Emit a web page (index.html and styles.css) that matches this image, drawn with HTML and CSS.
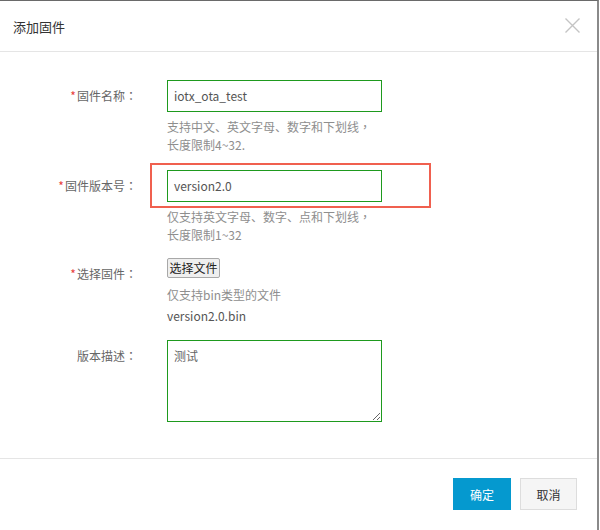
FILE: index.html
```html
<!DOCTYPE html>
<html lang="zh-CN">
<head>
<meta charset="utf-8">
<title>添加固件</title>
<link rel="stylesheet" href="styles.css">
</head>
<body>
<div class="dialog">
  <div class="dialog-header">
    <span class="dialog-title">添加固件</span>
    <span class="dialog-close" aria-label="关闭">
      <svg width="15" height="15" viewBox="0 0 15 15"><path d="M0.5 0.5 L14.5 14.5 M14.5 0.5 L0.5 14.5" stroke="#c4c4c4" stroke-width="1.4" fill="none"/></svg>
    </span>
  </div>
  <div class="dialog-body">
    <div class="form-row row-1">
      <div class="form-label"><span class="req">*</span>固件名称<span class="colon" lang="zh-TW">：</span></div>
      <div class="form-field">
        <div class="input">iotx_ota_test</div>
        <div class="help">支持中文、英文字母、数字和下划线<span class="colon" lang="zh-TW">，</span><br>长度限制4~32.</div>
      </div>
    </div>
    <div class="form-row row-2">
      <div class="form-label"><span class="req">*</span>固件版本号<span class="colon" lang="zh-TW">：</span></div>
      <div class="form-field">
        <div class="input-wrap">
          <div class="input">version2.0</div>
          <div class="highlight"></div>
        </div>
        <div class="help">仅支持英文字母、数字、点和下划线<span class="colon" lang="zh-TW">，</span><br>长度限制1~32</div>
      </div>
    </div>
    <div class="form-row row-3">
      <div class="form-label"><span class="req">*</span>选择固件<span class="colon" lang="zh-TW">：</span></div>
      <div class="form-field">
        <button class="file-btn" type="button">选择文件</button>
        <div class="help help-file">仅支持bin类型的文件</div>
        <div class="file-name">version2.0.bin</div>
      </div>
    </div>
    <div class="form-row row-4">
      <div class="form-label">版本描述<span class="colon" lang="zh-TW">：</span></div>
      <div class="form-field">
        <textarea class="textarea">测试</textarea>
      </div>
    </div>
  </div>
  <div class="dialog-footer">
    <button class="btn btn-primary" type="button">确定</button>
    <button class="btn btn-default" type="button">取消</button>
  </div>
</div>
</body>
</html>
```

FILE: styles.css
```css
html, body {
  margin: 0;
  padding: 0;
  background: #ffffff;
}
body {
  font-family: "Noto Sans CJK SC", "Noto Sans", sans-serif;
  font-size: 12px;
  color: #666666;
}
.dialog {
  width: 597px;
  height: 529px;
  border-top: 1px solid #6a6a6a;
  border-right: 2px solid #8a8a8a;
  background: #ffffff;
}
.dialog-header {
  height: 50px;
  border-bottom: 1px solid #e5e5e5;
  display: flex;
  align-items: center;
  justify-content: space-between;
  padding: 0 17px 0 13px;
}
.dialog-title {
  font-size: 13px;
  color: #333333;
}
.dialog-close {
  display: flex;
  width: 15px;
  height: 15px;
  margin-top: -2px;
}
.dialog-body {
  padding: 28px 0 36px 0;
}
.form-row {
  display: flex;
  align-items: flex-start;
}
.row-1 { margin-bottom: 16px; }
.row-2 { margin-bottom: 14px; }
.row-3 { margin-bottom: 15px; }
.form-label {
  width: 137px;
  margin-right: 30px;
  text-align: right;
  line-height: 32px;
  color: #666666;
  white-space: nowrap;
}
.colon {
  font-family: "Noto Sans CJK TC", "Noto Sans CJK SC", sans-serif;
}
.req {
  color: #e8403a;
  margin-right: 1px;
}
.form-field {
  display: flex;
  flex-direction: column;
  align-items: flex-start;
}
.input {
  box-sizing: border-box;
  width: 215px;
  height: 32px;
  border: 1px solid #1e9a1e;
  padding: 0 6px;
  line-height: 30px;
  font-size: 12px;
  color: #555555;
}
.input-wrap {
  position: relative;
}
.highlight {
  position: absolute;
  top: -7px;
  bottom: -6px;
  left: -17px;
  right: -49px;
  border: 2px solid #f0604f;
  pointer-events: none;
}
.help {
  margin-top: 6px;
  line-height: 18px;
  color: #8e8e8e;
}
.help-file {
  margin-top: 8px;
}
.file-name {
  margin-top: 3px;
  line-height: 18px;
  color: #555555;
}
.file-btn {
  box-sizing: border-box;
  height: 20px;
  width: 53px;
  padding: 0;
  margin: 0;
  font-family: "Noto Sans CJK SC", sans-serif;
  font-size: 12px;
  line-height: 18px;
  color: #222222;
  background: #efefef;
  border: 1px solid #a8a8a8;
  border-radius: 2px;
}
.textarea {
  box-sizing: border-box;
  display: block;
  width: 215px;
  height: 82px;
  margin: 0;
  border: 1px solid #1e9a1e;
  padding: 6px 6px;
  font-family: "Noto Sans CJK SC", sans-serif;
  font-size: 12px;
  line-height: 18px;
  color: #666666;
  outline: none;
}
.dialog-footer {
  border-top: 1px solid #e5e5e5;
  padding: 19px 20px 0 0;
  display: flex;
  justify-content: flex-end;
  gap: 9px;
}
.btn {
  box-sizing: border-box;
  height: 32px;
  padding: 0;
  margin: 0;
  font-family: "Noto Sans CJK SC", sans-serif;
  font-size: 12px;
  cursor: pointer;
}
.btn-primary {
  width: 58px;
  background: #0599cf;
  border: 1px solid #0599cf;
  color: #ffffff;
}
.btn-default {
  width: 57px;
  background: #f5f5f5;
  border: 1px solid #dddddd;
  color: #333333;
}
```
